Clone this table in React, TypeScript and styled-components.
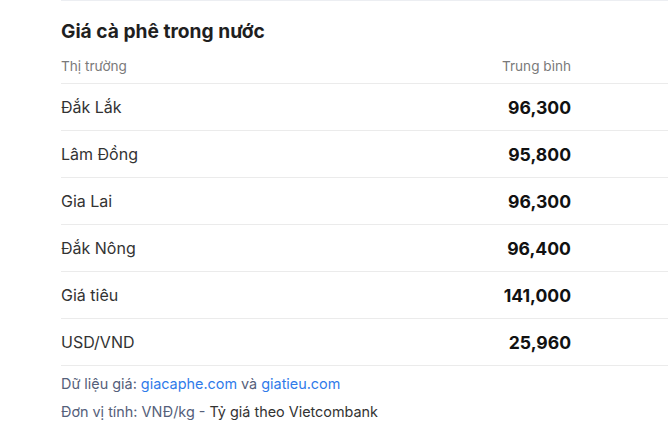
import React from "react";
import styled, { createGlobalStyle } from "styled-components";

const Global = createGlobalStyle`
  html, body { margin: 0; padding: 0; background: #ffffff; }
  body { font-family: Inter, "Noto Sans", sans-serif; -webkit-font-smoothing: antialiased; }
`;

const Section = styled.section`
  margin-left: 61px;
  border-top: 1px solid #eceef2;
  display: flex;
  flex-direction: column;
`;

const Title = styled.h2`
  margin: 0;
  padding: 16px 0 0;
  height: 29px;
  font-size: 19.2px;
  line-height: 29px;
  font-weight: 700;
  color: #1f1f1f;
`;

const Row = styled.div<{ $head?: boolean }>`
  display: grid;
  grid-template-columns: 1fr auto 97px;
  align-items: center;
  box-sizing: border-box;
  height: ${(p) => (p.$head ? "38px" : "47px")};
  padding-top: ${(p) => (p.$head ? "3px" : "0")};
  border-bottom: 1px solid #ebebeb;
`;

const HeadCell = styled.span<{ $right?: boolean }>`
  font-size: 13.6px;
  color: #7a7a7a;
  text-align: ${(p) => (p.$right ? "right" : "left")};
`;

const Name = styled.span`
  font-size: 16px;
  color: #333333;
`;

const Value = styled.span`
  font-size: 17.6px;
  font-weight: 700;
  color: #111111;
  text-align: right;
`;

const Footer = styled.div`
  display: flex;
  flex-direction: column;
  gap: 9px;
  padding-top: 8px;
  font-size: 14.4px;
  line-height: 19px;
  color: #55607a;
`;

const Link = styled.a`
  color: #2f7bea;
  text-decoration: none;
`;

const Dark = styled.span`
  color: #333333;
`;

const rows = [
  ["Đắk Lắk", "96,300"],
  ["Lâm Đồng", "95,800"],
  ["Gia Lai", "96,300"],
  ["Đắk Nông", "96,400"],
  ["Giá tiêu", "141,000"],
  ["USD/VND", "25,960"],
];

export default function App() {
  return (
    <>
      <Global />
      <Section>
        <Title>Giá cà phê trong nước</Title>
        <Row $head>
          <HeadCell>Thị trường</HeadCell>
          <HeadCell $right>Trung bình</HeadCell>
          <span />
        </Row>
        {rows.map(([n, v]) => (
          <Row key={n}>
            <Name>{n}</Name>
            <Value>{v}</Value>
            <span />
          </Row>
        ))}
        <Footer>
          <div>
            Dữ liệu giá: <Link href="#">giacaphe.com</Link> và{" "}
            <Link href="#">giatieu.com</Link>
          </div>
          <div>
            Đơn vị tính: VNĐ/kg - <Dark>Tỷ giá theo Vietcombank</Dark>
          </div>
        </Footer>
      </Section>
    </>
  );
}
